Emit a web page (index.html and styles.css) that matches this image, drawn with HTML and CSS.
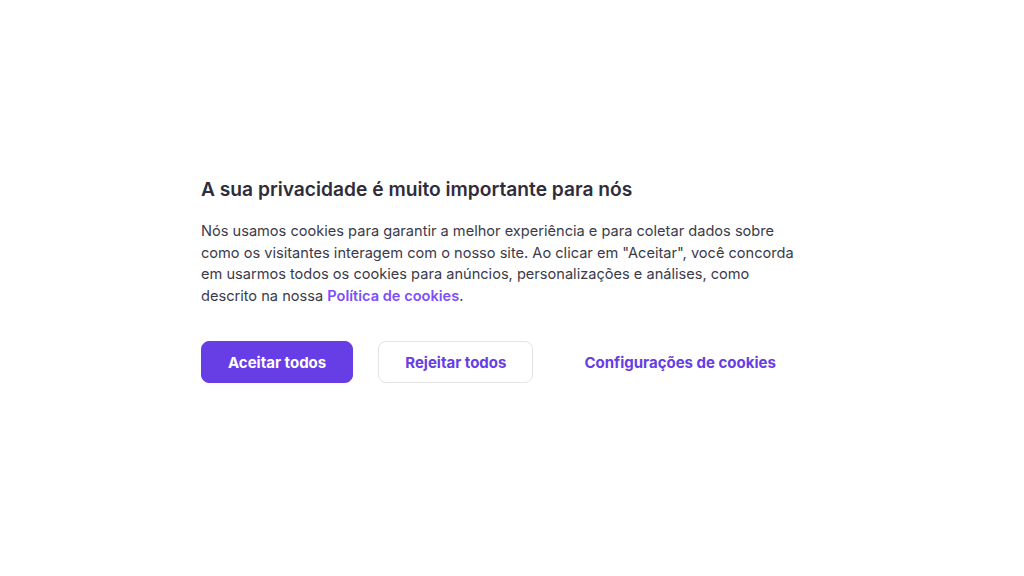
FILE: index.html
```html
<!DOCTYPE html>
<html lang="pt-BR">
<head>
    <meta charset="UTF-8">
    <meta name="viewport" content="width=device-width, initial-scale=1.0">
    <title>Cookies</title>
    <link rel="stylesheet" href="styles.css">
</head>
<body>
    <div class="cookie-box">
        <h2 class="cookie-title">A sua privacidade é muito importante para nós</h2>
        <p class="cookie-text">
            Nós usamos cookies para garantir a melhor experiência e para coletar dados sobre
            como os visitantes interagem com o nosso site. Ao clicar em "Aceitar", você concorda
            em usarmos todos os cookies para anúncios, personalizações e análises, como
            descrito na nossa <a href="#" class="cookie-link">Política de cookies</a>.
        </p>
        <div class="cookie-actions">
            <button class="btn btn-primary">Aceitar todos</button>
            <button class="btn btn-outline">Rejeitar todos</button>
            <button class="btn btn-text">Configurações de cookies</button>
        </div>
    </div>
</body>
</html>
```

FILE: styles.css
```css
body {
    font-family: 'Inter', 'Open Sans', sans-serif;
    background-color: #ffffff;
    margin: 0;
    padding: 0;
    height: 100vh;
    overflow: hidden;
}

.cookie-box {
    width: 622px;
    margin: 0 auto;
    padding-top: 177px;
}

.cookie-title {
    margin: 0 0 20px 0;
    font-size: 19.2px;
    line-height: 24px;
    font-weight: 600;
    color: #2f2d3b;
}

.cookie-text {
    max-width: 604px;
    margin: 0 0 34px 0;
    font-size: 14.6px;
    line-height: 21.5px;
    color: #3b3a4a;
}

.cookie-link {
    color: #7c4dff;
    font-weight: 600;
    text-decoration: none;
}

.cookie-actions {
    display: flex;
    gap: 25px;
}

.btn {
    height: 42px;
    padding: 0 26px;
    border-radius: 8px;
    font-family: inherit;
    font-size: 15px;
    font-weight: 700;
    cursor: pointer;
}

.btn-primary {
    background-color: #673de6;
    border: 1px solid #673de6;
    color: #ffffff;
}

.btn-outline {
    background-color: #ffffff;
    border: 1px solid #e3e3e8;
    color: #673de6;
}

.btn-text {
    margin-left: -1px;
    background: none;
    border: 1px solid transparent;
    color: #673de6;
}
```
